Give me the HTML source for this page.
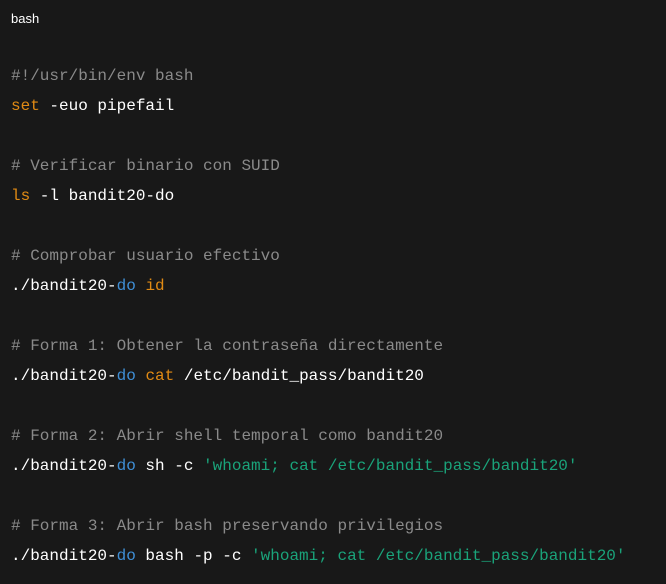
<!DOCTYPE html>
<html><head><meta charset="utf-8"><style>
html,body{margin:0;padding:0;background:#181818;width:666px;height:584px;overflow:hidden}
.lbl{position:absolute;left:11px;top:11px;font:13px "Liberation Sans",sans-serif;color:#fff}
pre{position:absolute;left:11px;top:61px;margin:0;font:16px/30px "Liberation Mono",monospace;color:#fff;white-space:pre}
.c{color:#8a8a8a}.k{color:#e08a14}.b{color:#3f8fd6}.s{color:#1aa37a}
</style></head><body>
<div class="lbl">bash</div>
<pre><span class="c">#!/usr/bin/env bash</span>
<span class="k">set</span> -euo pipefail

<span class="c"># Verificar binario con SUID</span>
<span class="k">ls</span> -l bandit20-do

<span class="c"># Comprobar usuario efectivo</span>
./bandit20-<span class="b">do</span> <span class="k">id</span>

<span class="c"># Forma 1: Obtener la contraseña directamente</span>
./bandit20-<span class="b">do</span> <span class="k">cat</span> /etc/bandit_pass/bandit20

<span class="c"># Forma 2: Abrir shell temporal como bandit20</span>
./bandit20-<span class="b">do</span> sh -c <span class="s">'whoami; cat /etc/bandit_pass/bandit20'</span>

<span class="c"># Forma 3: Abrir bash preservando privilegios</span>
./bandit20-<span class="b">do</span> bash -p -c <span class="s">'whoami; cat /etc/bandit_pass/bandit20'</span></pre>
</body></html>
